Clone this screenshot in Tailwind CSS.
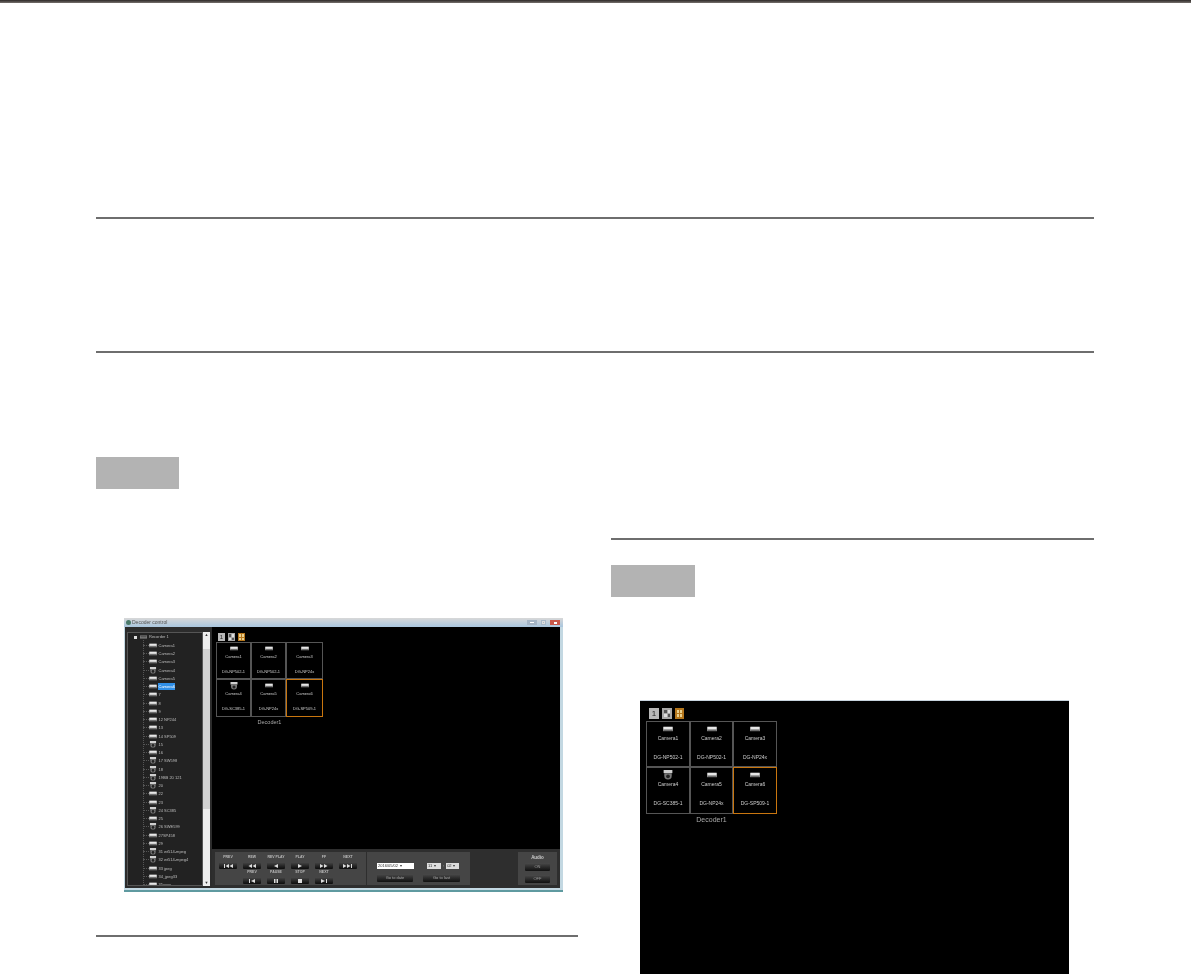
<!DOCTYPE html>
<html lang="en">
<head>
  <meta charset="UTF-8" />
  <title>Decoder control</title>
  <script src="https://cdn.jsdelivr.net/npm/@tailwindcss/browser@4"></script>
</head>
<body class="bg-white font-['Liberation_Sans',sans-serif]">
<div class="h-[974px] overflow-hidden">
  <div class="h-[3px] bg-gradient-to-b from-[#2e2a28] to-[#77716e]"></div>

  <div class="ml-[96px] w-[998px]">
    <div class="mt-[214px] h-[134px] border-t-2 border-[#6e6e6e]"></div>
    <div class="h-[106px] border-t-2 border-[#6e6e6e]"></div>

    <div class="grid grid-cols-[482px_483px] gap-x-[33px]">
      <!-- Left column -->
      <div>
        <div class="w-[83px] h-[32px] bg-[#b3b3b3]"></div>

        <!-- Decoder control window -->
        <div class="mt-[129px] ml-[28px] w-[439px] h-[274px] flex flex-col bg-[#c3d8e2] border-b-2 border-[#5f9aa0] overflow-hidden blur-[0.35px]">
          <div class="h-[9px] shrink-0 flex items-center justify-between pl-[2px] pr-[3px] bg-gradient-to-b from-[#d8d8d8] to-[#a9c6de]">
            <div class="flex items-center gap-[1px]">
              <div class="w-[5px] h-[5px] rounded-full bg-[#4a7a6a]"></div>
              <span class="text-[5px] leading-none text-[#555]">Decoder control</span>
            </div>
            <div class="flex items-center gap-[4px]">
              <div class="w-[10px] h-[5px] bg-[#a5b5c5] flex items-center justify-center"><div class="w-[4px] h-[1px] bg-white"></div></div>
              <div class="w-[5px] h-[5px] bg-[#a9b9c9] flex items-center justify-center"><div class="w-[3px] h-[3px] border border-[#ddd]"></div></div>
              <div class="w-[10px] h-[5px] bg-[#c9584a] flex items-center justify-center"><div class="w-[3px] h-[2px] bg-white"></div></div>
            </div>
          </div>

          <div class="flex-1 min-h-0 flex bg-black ml-[1px] mr-[3px] mb-[2px]">
            <!-- Tree -->
            <div class="w-[87px] shrink-0 bg-[#2c2c2c] pl-[2px] pt-[5px] flex">
              <div class="relative w-[76px] h-[254px] border border-[#555] overflow-hidden bg-[#222]">
                <div class="absolute left-[15px] top-[7px] bottom-0 border-l border-dotted border-[#555]"></div>
                <div id="tree" class="relative flex flex-col gap-[2.25px] pl-[5px] pt-[1px] text-[4px] leading-[6px] text-[#bdbdbd]"></div>
              </div>
              <div class="w-[7px] h-[254px] bg-[#eeeeee] flex flex-col justify-between items-center py-[1px]">
                <span class="text-[4px] leading-none text-[#333]">▲</span>
                <div class="w-[7px] h-[160px] bg-[#d2d2d2] mb-[60px]"></div>
                <span class="text-[4px] leading-none text-[#333]">▼</span>
              </div>
            </div>

            <!-- Monitor area -->
            <div class="flex-1 min-w-0 flex flex-col">
              <div class="flex-1 min-h-0 pl-[4px] pt-[6px]">
                <div class="flex gap-[3px] ml-[2px] h-[8px]">
                  <div class="w-[7px] h-[8px] bg-[#b8b8b8] text-[6px] leading-[8px] text-center text-[#222]">1</div>
                  <div class="w-[7px] h-[8px] bg-[#a8a8a8] grid grid-cols-2 gap-[1px] p-[1px]"><div class="bg-[#555]"></div><div class="bg-[#ddd]"></div><div class="bg-[#ddd]"></div><div class="bg-[#555]"></div></div>
                  <div class="w-[7px] h-[8px] bg-[#b5761c] grid grid-cols-2 gap-[1px] p-[1px]"><div class="bg-[#e8d090]"></div><div class="bg-[#e8d090]"></div><div class="bg-[#e8d090]"></div><div class="bg-[#e8d090]"></div></div>
                </div>
                <div data-grid="small" class="mt-[1px] grid grid-cols-[35px_35px_37px] grid-rows-[37px_38px] w-[107px] text-[4px] leading-none text-[#ccc] text-center"></div>
                <p class="mt-[2px] w-[107px] text-center text-[5.5px] leading-[7px] text-[#aaa]">Decoder1</p>
              </div>

              <!-- Playback controls -->
              <div class="h-[39px] shrink-0 bg-[#2e2e2e] flex gap-[1px] pl-[3px] pr-[3px] py-[3px]">
                <div class="w-[151px] bg-[#454545] pl-[4px] pt-[3px]">
                  <div class="flex gap-[6px]" id="row1"></div>
                  <div class="flex gap-[6px] mt-[1px] ml-[24px]" id="row2"></div>
                </div>
                <div class="w-[103px] bg-[#454545] pl-[10px] pt-[11px]">
                  <div class="flex items-center h-[6px]">
                    <div class="w-[37px] h-[6px] bg-white text-[4px] leading-[6px] pl-[1px] text-[#333]">2016/05/02&nbsp;&nbsp;▾</div>
                    <div class="ml-[13px] w-[14px] h-[6px] bg-[#ddd] text-[4px] leading-[6px] pl-[1px] text-[#333]">11&nbsp;&nbsp;▾</div>
                    <span class="mx-[2px] text-[4px] leading-none text-[#ddd]">:</span>
                    <div class="w-[13px] h-[6px] bg-[#ddd] text-[4px] leading-[6px] pl-[1px] text-[#333]">02&nbsp;▾</div>
                  </div>
                  <div class="flex gap-[10px] mt-[5px]">
                    <div class="w-[36px] h-[8px] rounded-[1px] bg-gradient-to-b from-[#4a4a4a] to-[#111] text-[4px] leading-[8px] text-center text-[#aaa]">Go to date</div>
                    <div class="w-[37px] h-[8px] rounded-[1px] bg-gradient-to-b from-[#4a4a4a] to-[#111] text-[4px] leading-[8px] text-center text-[#aaa]">Go to last</div>
                  </div>
                </div>
                <div class="ml-[47px] w-[39px] bg-[#454545] flex flex-col items-center pt-[3px]">
                  <span class="text-[4.5px] leading-[5px] font-bold text-[#ccc]">Audio</span>
                  <div class="mt-[3px] w-[25px] h-[8px] rounded-[1px] bg-gradient-to-b from-[#4a4a4a] to-[#111] text-[4px] leading-[8px] text-center text-[#999]">ON</div>
                  <div class="mt-[4px] w-[25px] h-[8px] rounded-[1px] bg-gradient-to-b from-[#4a4a4a] to-[#111] text-[4px] leading-[8px] text-center text-[#999]">OFF</div>
                </div>
              </div>
            </div>
          </div>
        </div>

        <div class="mt-[43px] h-[2px] bg-[#6e6e6e]"></div>
      </div>

      <!-- Right column -->
      <div>
        <div class="mt-[81px] h-[2px] bg-[#6e6e6e]"></div>
        <div class="mt-[25px] w-[84px] h-[32px] bg-[#b3b3b3]"></div>

        <!-- Enlarged monitor area -->
        <div class="mt-[103px] ml-[29px] w-[429px] h-[274px] bg-black border-t border-[#c8d4de] pl-[6px] pt-[7px] blur-[0.35px]">
          <div class="flex gap-[3px] ml-[3px] h-[11px]">
            <div class="w-[10px] h-[11px] bg-[#b8b8b8] text-[8px] leading-[11px] text-center text-[#222]">1</div>
            <div class="w-[10px] h-[11px] bg-[#a8a8a8] grid grid-cols-2 gap-[1px] p-[2px]"><div class="bg-[#555]"></div><div class="bg-[#ddd]"></div><div class="bg-[#ddd]"></div><div class="bg-[#555]"></div></div>
            <div class="w-[9px] h-[11px] bg-[#b5761c] grid grid-cols-2 gap-[1px] p-[2px]"><div class="bg-[#e8d090]"></div><div class="bg-[#e8d090]"></div><div class="bg-[#e8d090]"></div><div class="bg-[#e8d090]"></div></div>
          </div>
          <div data-grid="large" class="mt-[2px] grid grid-cols-[44px_43px_44px] grid-rows-[46px_47px] w-[131px] text-[5px] leading-none text-[#ccc] text-center"></div>
          <p class="mt-[1px] w-[131px] text-center text-[7px] leading-[9px] text-[#aaa]">Decoder1</p>
        </div>
      </div>
    </div>
  </div>
</div>

<script>
  const boxIcon = (w, h, fill = "#e6e6e6") => `<svg width="${w}" height="${h}" viewBox="0 0 16 9" class="shrink-0"><rect x="0" y="1" width="16" height="7" fill="#8a8a8a"/><rect x="1" y="1" width="14" height="4" fill="${fill}"/><rect x="1" y="6" width="14" height="1" fill="#555"/></svg>`;
  const domeIcon = (w, h) => `<svg width="${w}" height="${h}" viewBox="0 0 16 16" class="shrink-0"><rect x="1" y="0" width="14" height="5" fill="#cfcfcf"/><path d="M2 5h12v4a6 6 0 0 1-12 0z" fill="#777"/><circle cx="8" cy="10" r="3" fill="#222"/></svg>`;

  const cameras = [
    ["Camera1"], ["Camera2"], ["Camera3"], ["Camera4", 1], ["Camera5"], ["Camera6", 0, 1],
    ["7"], ["8"], ["9"], ["12 NP244"], ["13"], ["14 SP509"], ["15", 1], ["16"],
    ["17 SW598", 1], ["18", 1], ["19BB 20 121", 1], ["20", 1], ["22"], ["23"], ["24 SC385", 1],
    ["25"], ["26 SWE599", 1], ["27SP458"], ["29"], ["31 wt514-mpeg", 1], ["32 wt514-mpeg4", 1],
    ["33 jpeg"], ["34_jpeg33"], ["35xxxx"]
  ];

  let treeHtml = `<div class="flex items-center h-[6px] gap-[3px] pl-[1px]"><div class="w-[3px] h-[3px] bg-[#ddd]"></div>${boxIcon(7, 4, "#555")}<span class="ml-[-1px]">Recorder 1</span></div>`;
  cameras.forEach(([name, dome, selected]) => {
    treeHtml += `<div class="flex items-center h-[6px] ml-[10px]"><div class="w-[6px] border-t border-dotted border-[#555]"></div>${dome ? domeIcon(8, 7) : boxIcon(8, 5)}<span class="${selected ? "bg-[#2f8fe8] text-white" : ""} ml-[1px] leading-[7px] px-[0.5px] whitespace-nowrap">${name}</span></div>`;
  });
  document.getElementById("tree").innerHTML = treeHtml;

  const cells = [
    ["Camera1", "DG-NP502-1"], ["Camera2", "DG-NP502-1"], ["Camera3", "DG-NP24x"],
    ["Camera4", "DG-SC385-1", 1], ["Camera5", "DG-NP24x"], ["Camera6", "DG-SP509-1", 0, 1]
  ];

  document.querySelectorAll("[data-grid]").forEach(grid => {
    const large = grid.dataset.grid === "large";
    grid.innerHTML = cells.map(([name, model, dome, active]) => `
      <div class="flex flex-col items-center border ${active ? "border-[#c9760f]" : "border-[#555]"} pt-[2px]">
        <div class="${large ? "h-[9px]" : "h-[7px]"} flex items-center">${dome ? domeIcon(large ? 10 : 8, large ? 10 : 8) : boxIcon(large ? 10 : 8, large ? 6 : 5)}</div>
        <span class="mt-[3px]">${name}</span>
        <span class="${large ? "mt-[14px]" : "mt-[11px]"} whitespace-nowrap">${model}</span>
      </div>`).join("");
  });

  // transport glyphs, drawn on a 12x6 box
  const glyphs = {
    first: "M2 1h1v4H2zM7 1v4L3.5 3zM11 1v4L7.5 3z",
    rew: "M6 1v4L2.5 3zM10 1v4L6.5 3z",
    back: "M8 1v4L4 3z",
    play: "M4 1v4l4-2z",
    ff: "M2 1v4l3.5-2zM6 1v4l3.5-2z",
    last: "M1 1v4l3.5-2zM5 1v4l3.5-2zM9 1h1v4H9z",
    stepBack: "M3 1h1v4H3zM9 1v4L5 3z",
    pause: "M4 1h1.5v4H4zM6.5 1H8v4H6.5z",
    stop: "M4 1h4v4H4z",
    stepNext: "M3 1v4l4-2zM8 1h1v4H8z"
  };
  const btn = (label, glyph) => `
    <div class="w-[18px] flex flex-col items-center">
      <span class="text-[3.5px] leading-[5px] font-bold text-[#bbb] whitespace-nowrap">${label}</span>
      <div class="mt-[2px] w-[18px] h-[7px] rounded-[1px] bg-gradient-to-b from-[#4a4a4a] to-[#0d0d0d] flex items-center justify-center">
        <svg width="12" height="6" viewBox="0 0 12 6"><path d="${glyphs[glyph]}" fill="#ddd"/></svg>
      </div>
    </div>`;
  document.getElementById("row1").innerHTML = [["PREV", "first"], ["REW", "rew"], ["REV PLAY", "back"], ["PLAY", "play"], ["FF", "ff"], ["NEXT", "last"]].map(b => btn(...b)).join("");
  document.getElementById("row2").innerHTML = [["PREV", "stepBack"], ["PAUSE", "pause"], ["STOP", "stop"], ["NEXT", "stepNext"]].map(b => btn(...b)).join("");
</script>
</body>
</html>
